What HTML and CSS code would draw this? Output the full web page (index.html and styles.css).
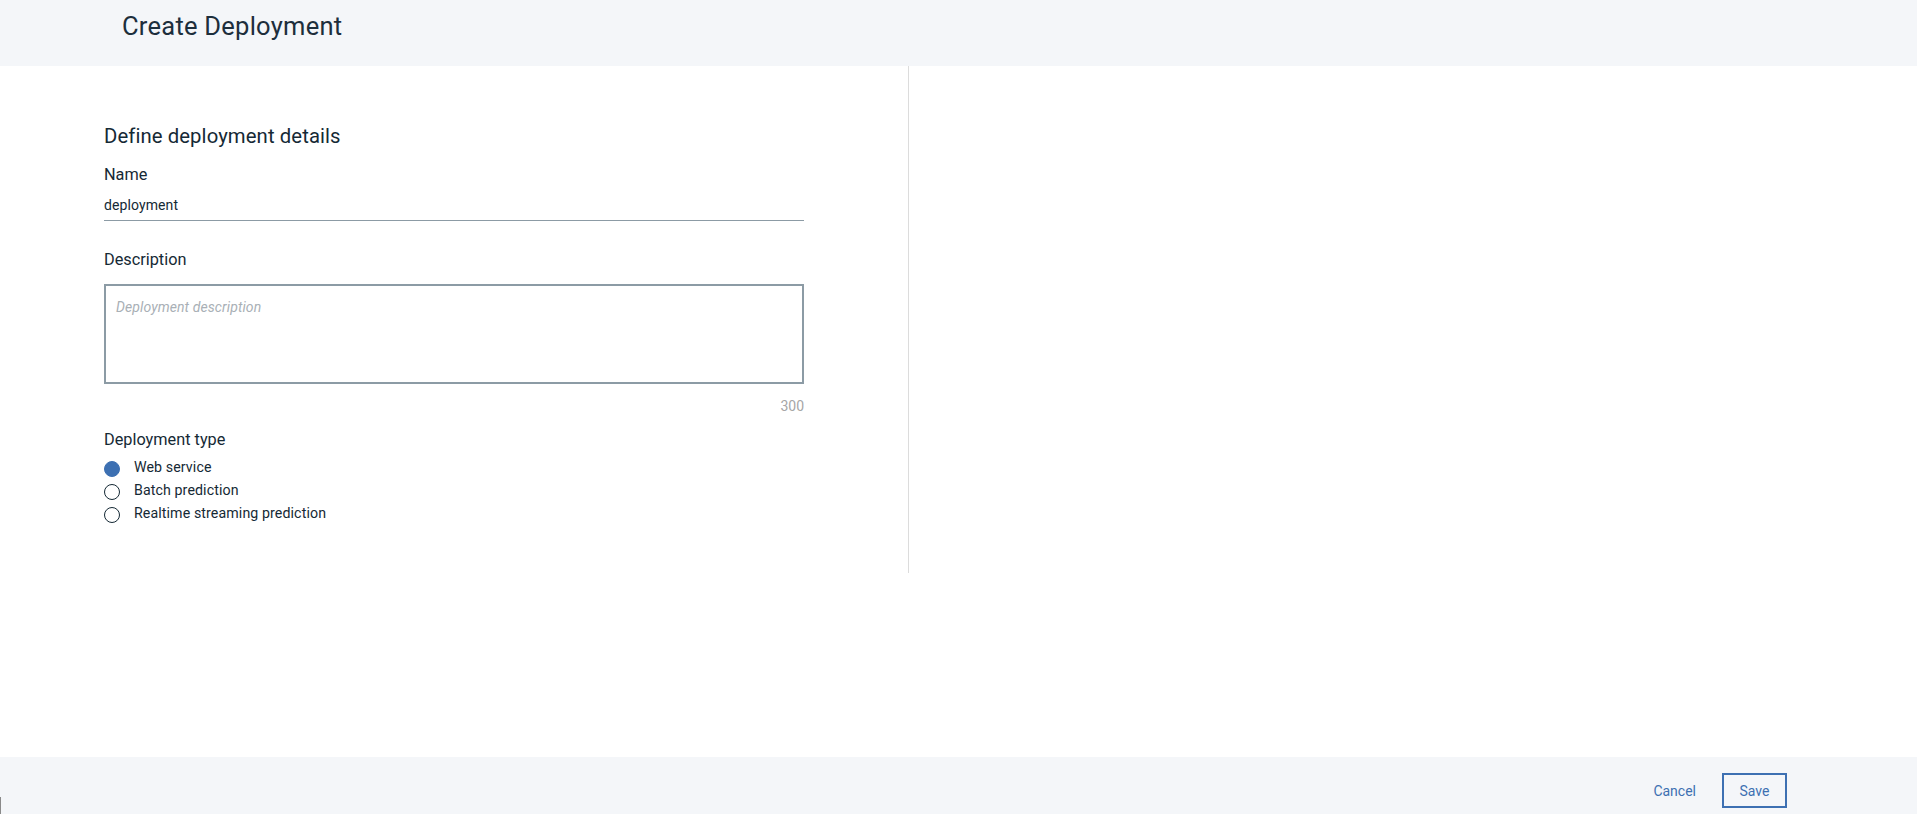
FILE: index.html
```html
<!DOCTYPE html>
<html lang="en">
<head>
<meta charset="utf-8">
<title>Create Deployment</title>
<link rel="stylesheet" href="styles.css">
</head>
<body>
<div class="page">
  <header class="header">
    <h1 class="title">Create Deployment</h1>
  </header>
  <main class="main">
    <section class="form-panel">
      <h2 class="section-title">Define deployment details</h2>
      <label class="label" for="name">Name</label>
      <div class="text-input"><span class="value">deployment</span></div>
      <label class="label label-desc">Description</label>
      <div class="textarea"><span class="placeholder">Deployment description</span></div>
      <div class="counter">300</div>
      <div class="label label-type">Deployment type</div>
      <div class="radios">
        <div class="radio-row"><span class="radio checked"></span><span class="radio-label">Web service</span></div>
        <div class="radio-row"><span class="radio"></span><span class="radio-label">Batch prediction</span></div>
        <div class="radio-row"><span class="radio"></span><span class="radio-label">Realtime streaming prediction</span></div>
      </div>
    </section>
    <section class="side-panel"></section>
  </main>
  <footer class="footer">
    <span class="edge-mark"></span>
    <div class="actions">
      <button class="btn btn-ghost">Cancel</button>
      <button class="btn btn-secondary">Save</button>
    </div>
  </footer>
</div>
</body>
</html>
```
FILE: styles.css
```css
* { box-sizing: border-box; }
html, body { margin: 0; padding: 0; }
body {
  font-family: Roboto, "Noto Sans", "Liberation Sans", sans-serif;
  color: #152935;
  background: #ffffff;
}
.page {
  height: 814px;
  display: flex;
  flex-direction: column;
  overflow: hidden;
}
.header {
  height: 66px;
  flex: 0 0 66px;
  background: #f4f6f9;
  padding: 8px 0 0 122px;
}
.title {
  margin: 0;
  font-size: 25.5px;
  font-weight: 400;
  line-height: 37px;
  color: #1d2e3c;
  letter-spacing: 0.25px;
}
.main {
  flex: 1 1 auto;
  display: flex;
  align-items: flex-start;
}
.form-panel {
  width: 909px;
  height: 507px;
  border-right: 1px solid #dcdcdc;
  padding: 57px 0 0 104px;
  display: flex;
  flex-direction: column;
}
.section-title {
  margin: 0;
  font-size: 20.3px;
  font-weight: 400;
  line-height: 26px;
  letter-spacing: 0.1px;
}
.label {
  display: block;
  font-size: 16.3px;
  line-height: 20px;
  margin-top: 16px;
}
.text-input {
  width: 700px;
  height: 31px;
  margin-top: 5px;
  border-bottom: 1px solid #8c9ba5;
  display: flex;
  align-items: center;
}
.value {
  font-size: 14px;
  letter-spacing: 0.1px;
}
.label-desc { margin-top: 29px; }
.textarea {
  width: 700px;
  height: 100px;
  margin-top: 14px;
  border: 2px solid #8c9ba5;
  padding: 11px 10px;
}
.placeholder {
  font-size: 14px;
  font-style: italic;
  color: #a9b0b6;
  letter-spacing: 0.1px;
}
.counter {
  width: 700px;
  text-align: right;
  font-size: 14px;
  line-height: 20px;
  margin-top: 12px;
  color: #a6a6a6;
}
.label-type { margin-top: 14px; }
.radios {
  margin-top: 5px;
  display: flex;
  flex-direction: column;
}
.radio-row {
  height: 23.3px;
  display: flex;
  align-items: center;
  gap: 14px;
}
.radio {
  width: 16px;
  height: 16px;
  border-radius: 50%;
  border: 1px solid #152935;
  margin-top: 4px;
  flex: 0 0 16px;
}
.radio.checked {
  background: #3d70b2;
  border-color: #3d70b2;
}
.radio-label {
  font-size: 14.2px;
  line-height: 20px;
  letter-spacing: 0.1px;
}
.side-panel { flex: 1 1 auto; }
.footer {
  height: 57px;
  flex: 0 0 57px;
  background: #f4f6f9;
  display: flex;
  justify-content: space-between;
  align-items: flex-end;
  padding: 0 130px 6px 0;
}
.edge-mark {
  width: 1px;
  height: 17px;
  margin-bottom: -6px;
  background: #8a8a8a;
}
.actions {
  display: flex;
  align-items: center;
  gap: 26px;
}
.btn {
  font-family: inherit;
  font-size: 14px;
  color: #3d70b2;
  background: transparent;
  cursor: pointer;
}
.btn-ghost {
  border: none;
  padding: 0;
}
.btn-secondary {
  width: 65px;
  height: 35px;
  border: 2px solid #3d70b2;
  padding: 0;
}
```
